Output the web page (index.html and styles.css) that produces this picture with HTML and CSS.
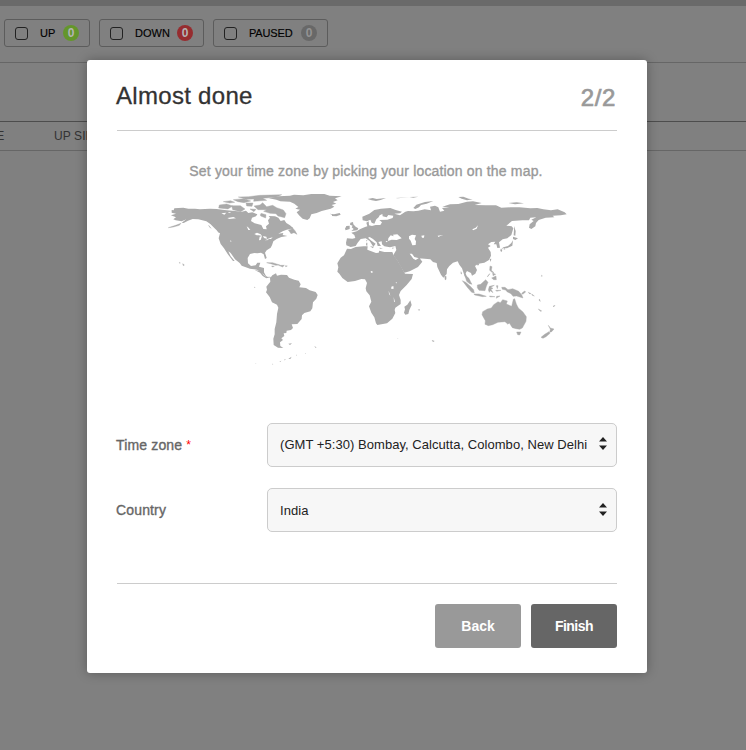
FILE: index.html
```
<!DOCTYPE html>
<html lang="en">
<head>
<meta charset="utf-8">
<title>Almost done</title>
<link rel="stylesheet" href="styles.css">
</head>
<body>
<div class="page">
  <div class="topbar"></div>
  <div class="filters">
    <label class="filter up"><i class="check"></i><span class="name">UP</span><b class="badge">0</b></label>
    <label class="filter down"><i class="check"></i><span class="name">DOWN</span><b class="badge">0</b></label>
    <label class="filter paused"><i class="check"></i><span class="name">PAUSED</span><b class="badge">0</b></label>
  </div>
  <div class="spacer"></div>
  <div class="thead"><span class="col-type">TYPE</span><span class="col-since">UP SINCE</span></div>
</div>
<div class="overlay">
  <section class="modal">
    <header class="modal-head"><h1>Almost done</h1><span class="step">2/2</span></header>
    <p class="hint">Set your time zone by picking your location on the map.</p>
    <svg class="map" width="410" height="190" viewBox="162 185 410 190">
      <!-- North America -->
      <g transform="translate(160 185) scale(.33333)">
        <path d="M35 75L41 76 43 70 55 69 70 68 85 71 105 71 120 73 150 71 170 72 200 76 225 78 245 80 258 77 265 84 277 82 292 88 288 94 276 98 273 108 284 115 304 120 310 132 320 133 318 124 327 116 324 106 330 98 326 93 345 94 355 98 362 108 373 105 379 114 390 121 400 130 380 134 368 139 355 146 370 144 368 150 382 153 364 156 350 162 340 169 336 181 332 188 320 196 315 203 320 219 315 222 311 208 303 203 292 205 283 204 270 207 263 219 264 235 273 243 287 241 292 233 301 233 297 245 312 249 312 262 318 273 327 278 321 279 307 265 291 254 270 251 245 242 239 234 225 223 212 204 205 199 212 214 224 228 219 228 203 207 192 190 182 177 176 160 180 145 166 132 151 117 139 109 115 103 98 102 84 107 71 114 65 113 79 103 65 109 47 106 40 103 48 97 33 91 48 86 35 83Z"/>
        <path class="isles" d="M25 128L47 121 63 115 58 121 40 126ZM178 60L200 57 218 63 204 72 176 69ZM190 50L212 47 224 52 209 54ZM215 62L241 62 255 72 242 80 218 74ZM220 44L252 41 272 48 252 53 234 50ZM258 54L279 54 276 64 260 63ZM282 63L300 60 308 53 320 65 338 61 350 68 370 75 378 86 374 98 354 93 348 86 330 85 311 79 320 74 294 74ZM270 72L288 73 282 80ZM235 36L266 35 300 31 365 29 347 37 308 40 320 46 281 49 282 42 259 43ZM300 84L318 89 317 99 302 93ZM385 135L394 133 395 126 405 137 411 148 402 143 393 146 389 140ZM171 134L184 143 175 142ZM320 233L338 233 359 240 347 241 332 236ZM356 241L373 241 368 246ZM335 243L343 244 337 246ZM376 242L382 243 377 245ZM146 121L153 130 149 126ZM68 236L73 240 70 242ZM58 232L61 234 59 235Z"/>
        <path class="water" d="M283 147L291 143 302 148 306 153 297 151 290 151ZM299 155L306 153 302 165 297 166ZM309 153L319 155 321 161 312 159ZM314 166L325 162 325 165ZM322 161L338 157 333 162ZM260 124L266 128 271 135 265 135ZM202 99L220 96 228 100 208 102ZM184 85L199 83 193 89ZM211 166L215 169 211 170ZM283 79L305 81 300 89 290 85ZM203 81L214 82 208 84Z"/>
      </g>
      <!-- Greenland, Europe and Asia -->
      <g transform="translate(290 185) scale(.33333)">
        <path d="M-63 40L-35 34 0 32 12 29 40 31 64 27 103 27 119 32 155 34 135 40 143 46 129 51 139 56 125 60 133 65 122 71 95 78 80 84 64 88 59 100 52 105 38 101 27 91 20 82 30 74 16 71 25 66 13 56 0 50-29 49-41 44Z"/>
        <path d="M119 86L132 88 149 84 152 89 139 94 126 93 126 89ZM233 42L248 39 260 42 288 39 272 45 258 48 245 46ZM317 39L360 37 323 40ZM358 36L385 35 370 38ZM370 69L379 59 405 51 430 48 410 56 393 60 387 67 376 72ZM505 36L520 35 536 41 548 43 531 46 515 41ZM655 54L680 52 702 55 675 58ZM181 113L189 111 190 118 197 125 205 130 202 136 184 138 191 132 185 127 188 122 180 119ZM169 123L179 122 179 132 167 136 165 131Z"/>
        <path d="M169 181L168 173 171 160 187 161 196 159 193 150 184 143 200 139 211 132 225 126 232 124 229 113 236 109 237 121 246 123 257 120 271 120 276 112 268 105 292 104 308 99 310 92 295 90 290 97 278 94 277 87 269 91 266 97 259 103 253 116 245 113 241 104 231 109 218 106 217 95 238 86 253 75 273 71 301 69 317 75 336 80 330 85 313 86 330 91 346 80 354 78 370 79 385 77 404 73 423 76 420 65 435 62 445 67 450 80 463 77 456 69 478 67 457 65 480 58 505 57 531 50 549 49 575 54 554 60 587 61 618 61 634 68 661 67 688 67 721 70 742 69 760 73 783 76 803 73 824 82 830 88 812 91 788 92 793 97 767 98 746 105 738 114 736 124 724 132 717 128 719 118 731 108 724 104 739 97 721 98 717 106 697 106 666 108 649 122 665 124 670 130 664 150 652 160 638 163 627 172 630 188 622 189 619 178 611 178 616 170 604 171 594 178 602 183 594 188 602 201 603 212 597 225 583 233 565 236 555 243 561 255 556 266 546 272 543 264 531 258 527 265 531 276 542 289 536 288 524 274 516 250 508 239 503 229 489 233 478 243 471 253 470 267 460 278 453 269 442 246 440 234 429 231 421 223 387 220 373 216 366 206 359 206 370 221 377 225 388 218 397 230 384 246 359 259 343 263 334 248 323 229 310 211 313 205 319 195 316 183 300 187 283 184 276 178 275 169 265 171 273 183 263 183 260 172 249 162 239 156 234 158 245 168 257 176 250 185 239 168 227 160 212 162 203 173 197 183 182 186Z"/>
        <path d="M229 173L232 173 232 182 228 181ZM240 184L251 185 249 190ZM229 165L232 165 230 170ZM268 188L279 190 270 191ZM306 188L314 188 307 191ZM672 123L677 138 676 152 671 151 672 136ZM669 155L684 160 676 165 669 162ZM669 166L667 182 651 190 644 189 634 192 640 187 654 183 664 174ZM632 191L637 194 635 201 631 198ZM643 189L647 192 641 194ZM599 222L604 221 602 231ZM562 236L568 234 566 241 561 241ZM463 273L469 274 469 283 465 286Z"/>
        <path class="water" d="M295 160L302 151 311 154 309 149 322 148 335 160 320 165 305 164 294 168ZM357 154L366 149 378 151 374 162 378 169 377 180 367 181 362 167 357 161ZM394 152L403 151 402 158 396 158ZM547 133L557 128 564 121 560 131 549 136ZM443 152L460 150 451 153 445 156ZM287 168L294 169 289 172Z"/>
      </g>
      <!-- South America -->
      <g transform="translate(220 270) scale(.33333)">
        <path d="M104 0L125 4 130 14 139 21 151 20 152 26 148 22 139 25 128 18 120 8ZM150 25L157 16 168 10 171 17 183 14 201 15 207 23 223 29 236 32 242 43 238 52 258 54 269 61 287 66 293 75 289 86 279 97 277 115 271 124 253 129 246 136 245 147 232 162 215 163 219 174 213 180 200 182 199 189 191 190 193 198 184 205 189 210 180 217 181 228 190 234 174 233 161 225 160 206 164 193 164 177 169 157 171 132 175 113 171 104 156 97 149 81 138 67 141 59 139 50 146 41 151 35ZM205 221L216 220 210 225ZM102 50L107 52 103 53ZM283 229L290 232 286 233ZM228 255L231 254 229 257ZM178 275L184 272 181 276ZM192 270L197 266 195 271ZM205 266L215 260 211 267ZM157 281L160 282 157 284ZM255 250L258 251 255 252ZM107 280L109 281 107 282Z"/>
      </g>
      <!-- Africa -->
      <g transform="translate(330 250) scale(.33333)">
        <path d="M51-4L63-3 77-9 101-11 113-11 112-1 120 2 138 9 146 8 148 2 163 6 187 6 190 14 202 31 212 47 225 71 249 72 245 87 230 105 212 123 207 135 212 150 212 162 196 173 194 180 196 189 187 206 171 220 142 225 138 220 133 202 124 188 117 169 124 155 119 136 109 124 107 115 111 99 105 88 94 87 75 93 53 96 37 84 28 71 22 65 25 52 22 40 32 23 42 16ZM241 151L245 165 238 180 235 192 226 194 222 188 225 178 223 170 232 164Z"/>
        <path class="water" d="M184 110L190 108 191 116 184 117ZM176 122L181 137 177 132ZM191 141L195 156 192 155ZM122 64L127 63 128 68 123 68ZM197 96L200 96 199 101Z"/>
        <path d="M263 179L270 178 268 182ZM305 270L314 273 309 276ZM203 265L205 266 203 267Z"/>
      </g>
      <!-- Oceania -->
      <g transform="translate(440 250) scale(.33333)">
        <path class="isles" d="M128 185L142 177 154 174 161 164 174 155 181 158 188 149 202 153 199 162 215 169 220 148 224 146 229 162 235 174 249 186 259 200 258 214 247 234 239 238 228 236 217 233 208 219 204 223 195 215 174 217 158 224 145 227 135 223 136 212 126 194ZM230 246L243 246 239 255 233 254ZM325 226L331 234 342 237 335 245 329 247 331 238ZM327 245L330 250 318 260 309 265 303 262 314 253ZM67 92L77 97 90 108 101 119 103 129 95 127 83 113ZM74 74L86 84 92 96 96 103 89 101 80 94ZM102 132L117 132 139 139 128 140 104 135ZM112 105L122 103 137 89 144 97 139 109 135 122 117 121 112 113ZM148 109L163 106 152 112 159 115 153 118 159 128 151 122 148 127 145 120ZM185 112L195 112 204 119 218 116 236 124 245 134 249 144 239 141 230 138 219 139 213 131 201 125 197 120 187 118ZM150 48L156 50 154 61 162 68 156 67 149 61ZM155 84L168 78 169 89 161 89ZM158 69L167 73 159 77ZM145 75L150 71 142 81ZM148 138L165 140 151 141ZM170 139L180 138 169 145ZM169 107L174 107 172 116ZM167 121L183 121 170 124ZM245 130L254 123 257 126 248 133ZM265 127L273 131 268 131ZM275 132L283 138 277 136ZM295 177L305 183 301 184ZM298 147L301 154 298 152ZM340 168L345 166 341 171ZM63 65L65 72 63 72ZM305 76L307 78 304 79Z"/>
      </g>
    </svg>
    <div class="fields">
      <div class="field"><span class="label">Time zone <em>*</em></span>
        <div class="select zone"><span>(GMT +5:30) Bombay, Calcutta, Colombo, New Delhi</span><svg width="8" height="13" viewBox="0 0 8 13"><path d="M0 4.500L4 0l4 4.500zM0 8.500h8L4 13z"/></svg></div></div>
      <div class="field"><span class="label country">Country</span>
        <div class="select land"><span>India</span><svg width="8" height="13" viewBox="0 0 8 13"><path d="M0 4.500L4 0l4 4.500zM0 8.500h8L4 13z"/></svg></div></div>
    </div>
    <footer class="actions"><button class="back">Back</button><button class="finish">Finish</button></footer>
  </section>
</div>
</body>
</html>
```
FILE: styles.css
```
* { box-sizing: border-box; }
body { margin: 0; height: 750px; overflow: hidden; background: #808080; font-family: "Liberation Sans", Arial, sans-serif; }
.topbar { height: 6px; background: #6a6a6a; }
.filters { height: 57px; padding: 13px 0 0 4px; display: flex; gap: 9px; align-items: flex-start; border-bottom: 1px solid #666; }
.filter { height: 28px; display: flex; align-items: center; padding-left: 10px; border: 1px solid #5c5c5c; border-radius: 3px; font-size: 11px; color: #000; }
.filter.up { width: 86px; }
.filter.down { width: 105px; }
.filter.paused { width: 115px; }
.name { -webkit-text-stroke: .15px #000; }
.paused .name { letter-spacing: -.15px; }
.check { width: 13px; height: 13px; border: 1px solid #222; border-radius: 3px; margin-right: 12px; }
.badge { width: 16px; height: 16px; margin-left: auto; margin-right: 10px; border-radius: 50%; font-size: 12px; line-height: 16px; text-align: center; color: #b4b4b4; }
.up .badge { background: #64962b; }
.down .badge { background: #962c2f; }
.paused .badge { background: #686868; color: #939393; }
.spacer { height: 58px; }
.thead { height: 30px; border-top: 1px solid #4d4d4d; border-bottom: 1px solid #666; font-size: 12px; line-height: 28px; color: #333; display: flex; }
.col-type { width: 54px; margin-left: -27px; }
.col-since { margin-left: 27px; letter-spacing: .1px; }
.overlay { position: absolute; inset: 0; padding: 60px 0 0 87px; }
.modal { width: 560px; height: 613px; padding: 0 30px; background: #fff; border-radius: 3px; box-shadow: 0 0 12px rgba(0,0,0,.3); display: flex; flex-direction: column; }
.modal-head { height: 71px; flex: none; display: flex; justify-content: space-between; border-bottom: 1px solid #ccc; }
h1 { margin: 0 0 0 -1px; font-size: 24px; line-height: 72px; font-weight: 400; color: #333; letter-spacing: .3px; -webkit-text-stroke: .3px #333; }
.step { font-size: 24px; line-height: 76px; color: #999; letter-spacing: .6px; -webkit-text-stroke: .7px #999; margin-right: 1px; }
.hint { margin: 32px 2px 0 0; text-align: center; font-size: 14px; line-height: 16px; color: #999; letter-spacing: .17px; -webkit-text-stroke: .35px #999; white-space: nowrap; }
.map { display: block; margin: 6px 0 0 45px; fill: #aaa; }
.map .water { fill: #fff; }
.map .isles { stroke: #aaa; stroke-width: 1.2; }
.fields { margin-top: 48px; display: flex; flex-direction: column; gap: 21px; }
.field { display: flex; justify-content: space-between; align-items: center; height: 44px; }
.label { margin-left: -1px; font-size: 14px; color: #666; letter-spacing: .15px; -webkit-text-stroke: .35px #666; }
.label em { color: #f00; font-size: 12px; font-style: normal; line-height: 1; vertical-align: 1px; -webkit-text-stroke: 0; }
.select { width: 350px; height: 44px; padding: 0 9px 1px 12px; border: 1px solid #ccc; border-radius: 5px; background: #f7f7f7; font-size: 13px; color: #222; letter-spacing: .05px; display: flex; align-items: center; justify-content: space-between; white-space: nowrap; }
.select.land { padding-top: 1px; padding-bottom: 0; }
.select svg { fill: #222; flex: none; margin-top: -3px; }
.actions { margin-top: 51px; padding-top: 20px; border-top: 1px solid #ccc; display: flex; justify-content: flex-end; gap: 10px; }
button { width: 86px; height: 44px; padding: 0; border: 0; border-radius: 3px; font: bold 14px "Liberation Sans", Arial, sans-serif; color: #fff; }
.back { background: #999; }
.finish { background: #666; letter-spacing: -.5px; }
```
